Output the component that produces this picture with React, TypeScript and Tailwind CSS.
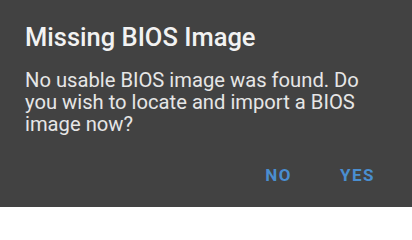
export default function App() {
  return (
    <div
      className="w-[412px] h-[207px] bg-[#424242] flex flex-col px-[25px] pt-[22px]"
      style={{ fontFamily: "Roboto, 'Noto Sans', sans-serif" }}
    >
      <h1 className="text-[25.5px] leading-[31px] font-medium text-[#f2f2f2]">Missing BIOS Image</h1>
      <p className="mt-[16px] text-[20.2px] leading-[22px] text-[#e6e6e6] pr-[10px]">
        No usable BIOS image was found. Do you wish to locate and import a BIOS image now?
      </p>
      <div className="flex justify-end items-center gap-[48px] mt-[28px] pr-[12px]">
        <button className="text-[17px] font-bold tracking-[1.5px] text-[#4a8ed0]">NO</button>
        <button className="text-[17px] font-bold tracking-[1.5px] text-[#4a8ed0]">YES</button>
      </div>
    </div>
  );
}
